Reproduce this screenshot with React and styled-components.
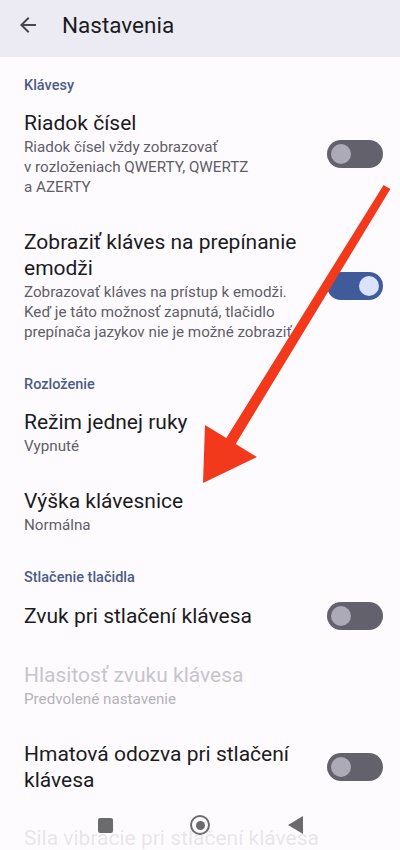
import React from 'react';
import styled, { createGlobalStyle } from 'styled-components';

const GlobalStyle = createGlobalStyle`
  html, body {
    margin: 0;
    padding: 0;
    background: #fefbff;
    overflow: hidden;
  }
  * {
    box-sizing: border-box;
  }
`;

const Page = styled.div`
  position: relative;
  width: 400px;
  height: 100vh;
  overflow: hidden;
  background: #fefbff;
  font-family: Roboto, 'Noto Sans', sans-serif;
  color: #1b1b21;
`;

const Header = styled.header`
  display: flex;
  align-items: center;
  gap: 22px;
  height: 57px;
  padding: 0 16px 7px;
  background: #ecebf3;
`;

const BackButton = styled.button`
  display: flex;
  align-items: center;
  justify-content: center;
  width: 24px;
  height: 24px;
  padding: 0;
  border: none;
  background: none;
  color: #45464f;
`;

const HeaderTitle = styled.h1`
  margin: 0;
  font-size: 22.5px;
  font-weight: 400;
  line-height: 28px;
  color: #1b1b21;
`;

const List = styled.div`
  display: flex;
  flex-direction: column;
  padding-top: 2px;
`;

const SectionTitle = styled.div`
  padding: 19px 24px 0;
  font-size: 14.5px;
  font-weight: 500;
  line-height: 16px;
  color: #4b5d86;
`;

const Item = styled.div`
  display: flex;
  align-items: center;
  gap: 16px;
  padding: 16px 17px 16px 24px;
`;

const ItemText = styled.div`
  flex: 1;
  min-width: 0;
`;

const ItemTitle = styled.div`
  font-size: 21px;
  line-height: 26px;
  color: ${(p) => (p.$disabled ? '#c6c5cb' : '#1b1b21')};
`;

const ItemSummary = styled.div`
  margin-top: 1px;
  font-size: 15.2px;
  line-height: 20px;
  color: ${(p) => (p.$disabled ? '#b3b2b8' : '#5f5e67')};
`;

const Switch = styled.div`
  position: relative;
  flex: none;
  width: 56px;
  height: 28px;
  border-radius: 14px;
  background: ${(p) => (p.$on ? '#3f5b99' : '#63626c')};
`;

const Thumb = styled.span`
  position: absolute;
  top: 4px;
  left: ${(p) => (p.$on ? '32px' : '4px')};
  width: 20px;
  height: 20px;
  border-radius: 50%;
  background: ${(p) => (p.$on ? '#d9e2ff' : '#abaab6')};
`;

const NavBar = styled.nav`
  position: absolute;
  left: 0;
  bottom: 0;
  width: 400px;
  height: 50px;
  display: flex;
  align-items: center;
  justify-content: center;
  gap: 75px;
  background: rgba(254, 251, 255, 0.9);
`;

const NavSlot = styled.div`
  display: flex;
  align-items: center;
  justify-content: center;
  width: 20px;
  height: 20px;
`;

const NavSquare = styled.span`
  width: 15px;
  height: 15px;
  border-radius: 2px;
  background: #6b6b6e;
`;

const NavHome = styled.span`
  display: flex;
  align-items: center;
  justify-content: center;
  width: 20px;
  height: 20px;
  border-radius: 50%;
  border: 2.5px solid #6b6b6e;

  &::after {
    content: '';
    width: 9px;
    height: 9px;
    border-radius: 50%;
    background: #6b6b6e;
  }
`;

const NavBack = styled.span`
  width: 0;
  height: 0;
  border-top: 9px solid transparent;
  border-bottom: 9px solid transparent;
  border-right: 15px solid #6b6b6e;
`;

const ArrowOverlay = styled.svg`
  position: absolute;
  top: 0;
  left: 0;
  width: 400px;
  height: 850px;
  pointer-events: none;
`;

const Toggle = ({ on }) => (
  <Switch $on={on}>
    <Thumb $on={on} />
  </Switch>
);

const Row = ({ title, summary, toggle, disabled }) => (
  <Item>
    <ItemText>
      <ItemTitle $disabled={disabled}>{title}</ItemTitle>
      {summary && <ItemSummary $disabled={disabled}>{summary}</ItemSummary>}
    </ItemText>
    {toggle !== undefined && <Toggle on={toggle} />}
  </Item>
);

export default function App() {
  return (
    <>
      <GlobalStyle />
      <Page>
        <Header>
          <BackButton aria-label="Späť">
            <svg width="24" height="24" viewBox="0 0 24 24" fill="currentColor">
              <path d="M20 11H7.83l5.59-5.59L12 4l-8 8 8 8 1.41-1.41L7.83 13H20v-2z" />
            </svg>
          </BackButton>
          <HeaderTitle>Nastavenia</HeaderTitle>
        </Header>

        <List>
          <SectionTitle>Klávesy</SectionTitle>
          <Row
            title="Riadok čísel"
            summary={'Riadok čísel vždy zobrazovať v\u00a0rozloženiach QWERTY, QWERTZ a\u00a0AZERTY'}
            toggle={false}
          />
          <Row
            title="Zobraziť kláves na prepínanie emodži"
            summary="Zobrazovať kláves na prístup k emodži. Keď je táto možnosť zapnutá, tlačidlo prepínača jazykov nie je možné zobraziť"
            toggle={true}
          />

          <SectionTitle>Rozloženie</SectionTitle>
          <Row title="Režim jednej ruky" summary="Vypnuté" />
          <Row title="Výška klávesnice" summary="Normálna" />

          <SectionTitle>Stlačenie tlačidla</SectionTitle>
          <Row title="Zvuk pri stlačení klávesa" toggle={false} />
          <Row title="Hlasitosť zvuku klávesa" summary="Predvolené nastavenie" disabled />
          <Row title="Hmatová odozva pri stlačení klávesa" toggle={false} />
          <Row title="Sila vibrácie pri stlačení klávesa" />
        </List>

        <ArrowOverlay viewBox="0 0 400 850">
          <polygon
            points="383.6,184.9 390.4,189.1 235.7,443.9 257,457 203,483 205,425 226.3,438.1"
            fill="#f2391c"
          />
        </ArrowOverlay>

        <NavBar>
          <NavSlot>
            <NavSquare />
          </NavSlot>
          <NavSlot>
            <NavHome />
          </NavSlot>
          <NavSlot>
            <NavBack />
          </NavSlot>
        </NavBar>
      </Page>
    </>
  );
}
